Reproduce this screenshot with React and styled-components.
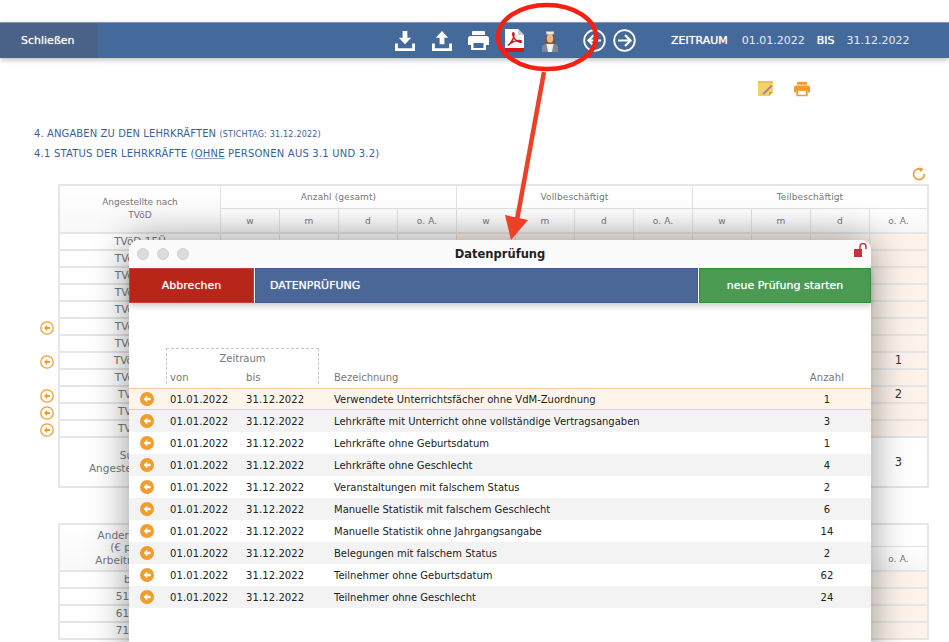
import React from 'react';
import styled, { createGlobalStyle } from 'styled-components';

const GlobalStyle = createGlobalStyle`
  html, body {
    margin: 0;
    padding: 0;
    background: #fff;
    height: 642px;
    overflow: hidden;
    font-family: "DejaVu Sans", Verdana, sans-serif;
  }
`;

const Page = styled.div`
  position: relative;
  width: 949px;
  height: 642px;
  overflow: hidden;
  padding-top: 22px;
  box-sizing: border-box;
`;

const Toolbar = styled.div`
  display: flex;
  align-items: center;
  height: 36px;
  background: #44699b;
  border-top: 1px solid #7f98bb;
  box-sizing: border-box;
  box-shadow: 0 2px 5px rgba(0, 0, 0, 0.25);
  color: #fff;
`;

const CloseButton = styled.div`
  width: 98px;
  height: 100%;
  box-sizing: border-box;
  padding-left: 21px;
  display: flex;
  align-items: center;
  background: #4a6287;
  font-size: 11px;
  font-weight: 500;
  text-shadow: 0 0 1px rgba(255, 255, 255, 0.7);
`;

const ToolIcons = styled.div`
  display: flex;
  align-items: center;
  margin-left: 289px;
`;

const ToolIcon = styled.div`
  width: ${(p) => p.$w || 36}px;
  margin-left: ${(p) => p.$ml || 0}px;
  height: 30px;
  display: flex;
  align-items: center;
  justify-content: center;
`;

const Period = styled.div`
  display: flex;
  align-items: center;
  margin-left: 32px;
`;

const PeriodItem = styled.span`
  margin-right: ${(p) => p.$gap}px;
  color: ${(p) => (p.$strong ? '#fff' : '#e6ecf5')};
  font-size: 11px;
  text-shadow: ${(p) => (p.$strong ? '0 0 1px rgba(255, 255, 255, 0.8)' : 'none')};
`;

const Actions = styled.div`
  display: flex;
  justify-content: flex-end;
  gap: 20px;
  height: 16px;
  margin-top: 23px;
  padding-right: 139px;
`;

const Headings = styled.div`
  margin-top: 30px;
  padding-left: 34px;
  color: #3b6295;
`;

const Heading = styled.div`
  font-size: 10px;
  line-height: 13px;
  letter-spacing: ${(p) => p.$track}px;
  margin-bottom: ${(p) => p.$after}px;
`;

const HeadingSmall = styled.small`
  font-size: 8px;
  line-height: 0;
  letter-spacing: 0.2px;
`;

const Underlined = styled.span`
  text-decoration: underline;
  text-decoration-color: #8ca2c2;
`;

const ReloadRow = styled.div`
  display: flex;
  justify-content: flex-end;
  height: 16px;
  margin-top: -1px;
  padding-right: 23px;
  margin-bottom: 1px;
`;

const Table = styled.div`
  display: grid;
  width: 929px;
  grid-template-columns: 58px 163px repeat(12, 59px);
  grid-template-rows: ${(p) => p.$rows};
  margin-bottom: 35px;
  font-size: 9px;
  color: #777;
`;

const Gutter = styled.div`
  display: flex;
  align-items: center;
  justify-content: flex-end;
  padding-right: 4px;
  grid-column: 1;
`;

const Cell = styled.div`
  box-sizing: border-box;
  display: flex;
  align-items: center;
  justify-content: center;
  text-align: center;
  line-height: ${(p) => p.$lh || 13}px;
  border-right: ${(p) => (p.$last ? '2px solid #e6e6e6' : '1px solid #e2e2e2')};
  border-bottom: 2px solid #e6e6e6;
  background: ${(p) => (p.$tint ? '#fdf3eb' : '#fff')};
`;

const GroupCell = styled(Cell)`
  grid-column: span 4;
  border-top: 2px solid #e6e6e6;
  border-bottom: 1px solid #e2e2e2;
  letter-spacing: 0.1px;
`;

const SubCell = styled(Cell)`
  background: linear-gradient(#fff, #f6f6f6);
  letter-spacing: 0.1px;
  padding-top: 2px;
`;

const RowHead = styled(Cell)`
  grid-column: 2;
  border-left: 2px solid #e6e6e6;
  font-size: 10.5px;
`;

const CornerHead = styled(RowHead)`
  grid-row: 1 / span 2;
  border-top: 2px solid #e6e6e6;
  background: linear-gradient(#fff, #f8f8f8);
  font-size: ${(p) => p.$size}px;
`;

const Value = styled.span`
  font-size: 11.5px;
  color: #333;
`;

const Modal = styled.div`
  position: absolute;
  left: 129px;
  top: 240px;
  width: 742px;
  height: 430px;
  background: #fff;
  border-radius: 10px 10px 0 0;
  box-shadow: 0 0 38px rgba(0, 0, 0, 0.42);
`;

const TitleBar = styled.div`
  position: relative;
  display: flex;
  align-items: center;
  justify-content: center;
  height: 28px;
  background: #fbfbfb;
  border-radius: 10px 10px 0 0;
  font-size: 11.5px;
  font-weight: 700;
  color: #222;
`;

const Lights = styled.div`
  position: absolute;
  left: 8px;
  top: 8px;
  display: flex;
  gap: 8px;
`;

const Light = styled.span`
  width: 12px;
  height: 12px;
  border-radius: 50%;
  background: #dcdcdc;
  border: 1px solid #d2d2d2;
  box-sizing: border-box;
`;

const LockSlot = styled.div`
  position: absolute;
  right: 3px;
  top: 3px;
`;

const ModalBar = styled.div`
  display: flex;
  height: 35px;
  box-shadow: 0 3px 6px rgba(0, 0, 0, 0.2);
  color: #fff;
  font-size: 11px;
  gap: 1px;
  text-shadow: 0 0 1px rgba(255, 255, 255, 0.7);
`;

const BarButton = styled.div`
  box-sizing: border-box;
  width: ${(p) => p.$w}px;
  flex: ${(p) => (p.$grow ? 1 : 'none')};
  display: flex;
  align-items: center;
  justify-content: ${(p) => (p.$grow ? 'flex-start' : 'center')};
  padding-left: ${(p) => (p.$grow ? 14 : 0)}px;
  background: ${(p) => p.$bg};
  border: 1px solid ${(p) => p.$edge};
`;

const ListHead = styled.div`
  position: relative;
  height: 85px;
`;

const DashBox = styled.div`
  position: absolute;
  left: 37px;
  top: 45px;
  width: 153px;
  height: 36px;
  box-sizing: border-box;
  border: 1px dashed #c8c8c8;
  border-bottom: none;
  text-align: center;
  padding-top: 4px;
  font-size: 10px;
  color: #777;
`;

const ListGrid = styled.div`
  display: grid;
  grid-template-columns: 41px 76px 88px 1fr 82px;
  align-items: center;
  height: ${(p) => p.$h || 22}px;
  box-sizing: border-box;
  font-size: 10px;
  letter-spacing: 0.1px;
  color: ${(p) => (p.$head ? '#777' : '#222')};
  background: ${(p) => (p.$active ? '#fdf5ea' : p.$odd ? '#f3f3f3' : '#fff')};
  border-top: ${(p) => (p.$active ? '1.5px solid #f5c9a0' : 'none')};
  border-bottom: ${(p) => (p.$active ? '1.5px solid #f5c9a0' : 'none')};
`;

const HeadRow = styled(ListGrid)`
  position: absolute;
  left: 0;
  right: 0;
  top: 63px;
  background: transparent;
`;

const Name = styled.span`
  letter-spacing: 0;
`;

const Count = styled.span`
  text-align: center;
  padding-right: 6px;
`;

const IconSlot = styled.span`
  display: flex;
  justify-content: flex-end;
  padding-right: 16px;
`;

const Annotation = styled.svg`
  position: absolute;
  left: 0;
  top: 0;
  pointer-events: none;
`;

const BackDot = () => (
  <svg width="14" height="14" viewBox="0 0 14 14">
    <circle cx="7" cy="7" r="7" fill="#f19c2c" />
    <path d="M7.2 3.4 3.6 7l3.6 3.6V8.3h3.4V5.7H7.2z" fill="#fff" />
  </svg>
);

const BackRing = () => (
  <svg width="14" height="14" viewBox="0 0 14 14">
    <circle cx="7" cy="7" r="6.2" fill="#fff" stroke="#f19c2c" strokeWidth="1.3" />
    <path d="M7 4 4 7l3 3V8.1h3V5.9H7z" fill="#f19c2c" />
  </svg>
);

const Reload = () => (
  <svg width="14" height="14" viewBox="0 0 14 14" fill="none">
    <path d="M8.5 2.1A5.4 5.4 0 1 0 12.3 7" stroke="#f19c2c" strokeWidth="1.6" />
    <path d="M7.3 0 11.6 2.2 8 5z" fill="#f19c2c" />
  </svg>
);

const Download = () => (
  <svg width="20" height="20" viewBox="0 0 21 21" fill="#fff">
    <path d="M8 0h5v7h4l-6.5 7L4 7h4z" />
    <path d="M0 13h3v5h15v-5h3v8H0z" />
  </svg>
);

const Upload = () => (
  <svg width="20" height="20" viewBox="0 0 21 21" fill="#fff">
    <path d="M10.5 0 17 7h-4v7H8V7H4z" />
    <path d="M0 13h3v5h15v-5h3v8H0z" />
  </svg>
);

const Printer = ({ color = '#fff', hole = '#44699b', size = 21 }) => (
  <svg width={size} height={size} viewBox="0 0 21 19">
    <path d="M5 0h11a1 1 0 0 1 1 1v3H4V1a1 1 0 0 1 1-1z" fill={color} />
    <path d="M2.5 5h16A2.5 2.5 0 0 1 21 7.5V14h-3v-3H3v3H0V7.5A2.5 2.5 0 0 1 2.5 5z" fill={color} />
    <path d="M3 10h15v9H3z" fill={color} />
    <path d="M5.5 12h10v5h-10z" fill={hole} />
  </svg>
);

const PdfIcon = () => (
  <svg width="19" height="23" viewBox="0 0 19 23">
    <path d="M0 0h13l6 6v17H0z" fill="#fdfdfd" />
    <path d="M13 0v6h6z" fill="#ccd0d6" />
    <path d="M0 19h19v4H0z" fill="#d4161c" />
    <path
      d="M3 16.500C6 14.500 9 9.500 9 5 9 3.300 7.700 3.300 7.700 5c0 3.500 3.500 7.800 7.500 8.200 1.700.2 1.700-1.600-.3-1.700-4-.2-9 1.800-11.900 5z"
      fill="none"
      stroke="#d4161c"
      strokeWidth="1.500"
    />
  </svg>
);

const AgentIcon = () => (
  <svg width="18" height="22" viewBox="0 0 18 22">
    <path d="M1 22v-5c0-2 2-3 4.500-3.500h7C15 14 17 15 17 17v5z" fill="#7e8790" />
    <path d="M5.500 14h7l-1.500 8H7z" fill="#f1f1f1" />
    <path d="M4.500 8C4.500 3.500 6 1.500 9 1.500S13.500 3.500 13.500 8c0 2.500.5 3.500 1 5.500H3.500c.5-2 1-3 1-5.500z" fill="#8a4f25" />
    <ellipse cx="9" cy="8.500" rx="3.200" ry="4.200" fill="#e8b98c" />
    <path d="M5 1.500 13 1.500 12.500 4.500h-7z" fill="#e9e9e9" />
  </svg>
);

const NavArrow = ({ left }) => (
  <svg width="23" height="23" viewBox="0 0 23 23" fill="none" stroke="#fff">
    <circle cx="11.500" cy="11.500" r="10.300" strokeWidth="1.800" />
    {left ? (
      <path d="M18 11.500H6M11 6l-5.500 5.500L11 17" strokeWidth="2.200" />
    ) : (
      <path d="M5 11.500h12M12 6l5.500 5.500L12 17" strokeWidth="2.200" />
    )}
  </svg>
);

const NoteIcon = () => (
  <svg width="16" height="16" viewBox="0 0 16 16">
    <path d="M0 0h15v11l-4 4H0z" fill="#f3d16b" />
    <path d="M0 0h15v2H0z" fill="#e9c25a" />
    <path d="M11 15v-4h4z" fill="#c9a544" />
    <path d="M5 12 13 4l1.300 1.300-8 8-2 .5z" fill="#9b7fa8" />
  </svg>
);

const LockOpen = () => (
  <svg width="14" height="14" viewBox="0 0 14 14">
    <path d="M0 6h8v8H0z" fill="#c5303c" />
    <path d="M6 6V3.500a3 3 0 0 1 6 0V6" fill="none" stroke="#c5303c" strokeWidth="1.500" />
  </svg>
);

const CHECKS = [
  ['Verwendete Unterrichtsfächer ohne VdM-Zuordnung', 1],
  ['Lehrkräfte mit Unterricht ohne vollständige Vertragsangaben', 3],
  ['Lehrkräfte ohne Geburtsdatum', 1],
  ['Lehrkräfte ohne Geschlecht', 4],
  ['Veranstaltungen mit falschem Status', 2],
  ['Manuelle Statistik mit falschem Geschlecht', 6],
  ['Manuelle Statistik ohne Jahrgangsangabe', 14],
  ['Belegungen mit falschem Status', 2],
  ['Teilnehmer ohne Geburtsdatum', 62],
  ['Teilnehmer ohne Geschlecht', 24],
];

const STAFF_ROWS = [
  { label: 'TVöD 15Ü' },
  { label: 'TVöD 15a' },
  { label: 'TVöD 14a' },
  { label: 'TVöD 13a' },
  { label: 'TVöD 12a' },
  { label: 'TVöD 11a', back: true },
  { label: 'TVöD 10a' },
  { label: 'TVöD 9a+', back: true, value: 1 },
  { label: 'TVöD 9ab' },
  { label: 'TVöD 15', back: true, value: 2 },
  { label: 'TVöD 14', back: true },
  { label: 'TVöD 13', back: true },
];

const GROUPS = ['Anzahl (gesamt)', 'Vollbeschäftigt', 'Teilbeschäftigt'];
const SUBS = ['w', 'm', 'd', 'o. A.'];
const COLS = Array.from({ length: 12 }, (_, i) => i);

// second table sits behind the dialog, only its last column shows labels
const TableHeader = ({ lines, size, partial }) => (
  <>
    <Gutter style={{ gridRow: '1 / span 2' }} />
    <CornerHead $lh={lines.length > 2 ? 12.5 : 13} $size={size}>
      <div>
        {lines.map((l) => (
          <div key={l}>{l}</div>
        ))}
      </div>
    </CornerHead>
    {GROUPS.map((g, i) => (
      <GroupCell key={g} $last={i === 2}>
        {partial ? null : g}
      </GroupCell>
    ))}
    {COLS.map((i) => (
      <SubCell key={i} $last={i === 11}>
        {partial && i !== 11 ? null : SUBS[i % 4]}
      </SubCell>
    ))}
  </>
);

const DataRow = ({ label, back, value }) => (
  <>
    <Gutter>{back && <BackRing />}</Gutter>
    <RowHead>{label}</RowHead>
    {COLS.map((i) => (
      <Cell key={i} $tint={i >= 4} $last={i === 11}>
        {i === 11 && value ? <Value>{value}</Value> : null}
      </Cell>
    ))}
  </>
);

const App = () => {
  return (
    <Page>
      <GlobalStyle />
      <Toolbar>
        <CloseButton>Schließen</CloseButton>
        <ToolIcons>
          <ToolIcon $w={36}><Download /></ToolIcon>
          <ToolIcon $w={37}><Upload /></ToolIcon>
          <ToolIcon $w={36}><Printer /></ToolIcon>
          <ToolIcon $w={36}><PdfIcon /></ToolIcon>
          <ToolIcon $w={36}><AgentIcon /></ToolIcon>
          <ToolIcon $w={30} $ml={11}><NavArrow left /></ToolIcon>
          <ToolIcon $w={30}><NavArrow /></ToolIcon>
        </ToolIcons>
        <Period>
          <PeriodItem $strong $gap={14}>ZEITRAUM</PeriodItem>
          <PeriodItem $gap={12}>01.01.2022</PeriodItem>
          <PeriodItem $strong $gap={12}>BIS</PeriodItem>
          <PeriodItem $gap={0}>31.12.2022</PeriodItem>
        </Period>
      </Toolbar>

      <Actions>
        <NoteIcon />
        <Printer color="#f19c2c" hole="#fff" size={16} />
      </Actions>

      <Headings>
        <Heading $track={0.1} $after={7}>
          4. ANGABEN ZU DEN LEHRKRÄFTEN <HeadingSmall>(STICHTAG: 31.12.2022)</HeadingSmall>
        </Heading>
        <Heading $track={0.2} $after={8}>
          4.1 STATUS DER LEHRKRÄFTE (<Underlined>OHNE</Underlined> PERSONEN AUS 3.1 UND 3.2)
        </Heading>
      </Headings>

      <ReloadRow>
        <Reload />
      </ReloadRow>

      <Table $rows="25px 25px repeat(12, 17px) 50px">
        <TableHeader lines={['Angestellte nach', 'TVöD']} size={9} />
        {STAFF_ROWS.map((r) => (
          <DataRow key={r.label} {...r} />
        ))}
        <Gutter />
        <RowHead>
          <div>
            Summe
            <br />
            Angestellte gesamt
          </div>
        </RowHead>
        {COLS.map((i) => (
          <Cell key={i} $last={i === 11}>
            {i === 11 ? <Value>3</Value> : null}
          </Cell>
        ))}
      </Table>

      <Table $rows="24px 25px repeat(5, 17px)">
        <TableHeader lines={['Andere Entgelte', '(€ pro Std.)', 'Arbeitnehmer/-in']} size={10.5} partial />
        <DataRow label="bis 50" />
        <DataRow label="51 bis 60" />
        <DataRow label="61 bis 70" />
        <DataRow label="71 bis 80" />
      </Table>

      <Modal>
        <TitleBar>
          <Lights>
            <Light />
            <Light />
            <Light />
          </Lights>
          Datenprüfung
          <LockSlot>
            <LockOpen />
          </LockSlot>
        </TitleBar>
        <ModalBar>
          <BarButton $w={125} $bg="#b8261a" $edge="#c8403a">Abbrechen</BarButton>
          <BarButton $grow $bg="#4b6797" $edge="#3f5c8e">DATENPRÜFUNG</BarButton>
          <BarButton $w={172} $bg="#4a9a52" $edge="#2f8f3a">neue Prüfung starten</BarButton>
        </ModalBar>
        <ListHead>
          <DashBox>Zeitraum</DashBox>
          <HeadRow $head $h={22}>
            <span />
            <span>von</span>
            <span>bis</span>
            <Name>Bezeichnung</Name>
            <Count>Anzahl</Count>
          </HeadRow>
        </ListHead>
        {CHECKS.map(([name, count], i) => (
          <ListGrid key={name} $active={i === 0} $odd={i % 2 === 1}>
            <IconSlot>
              <BackDot />
            </IconSlot>
            <span>01.01.2022</span>
            <span>31.12.2022</span>
            <Name>{name}</Name>
            <Count>{count}</Count>
          </ListGrid>
        ))}
      </Modal>

      <Annotation width="949" height="642" viewBox="0 0 949 642">
        <ellipse cx="547" cy="37" rx="49" ry="32" fill="none" stroke="#f5200f" strokeWidth="4.500" />
        <path d="M544 72 517 220" stroke="#ee4027" strokeWidth="4.500" fill="none" />
        <path d="M505 215 528 220 511 240z" fill="#ee4027" />
      </Annotation>
    </Page>
  );
};

export default App;
